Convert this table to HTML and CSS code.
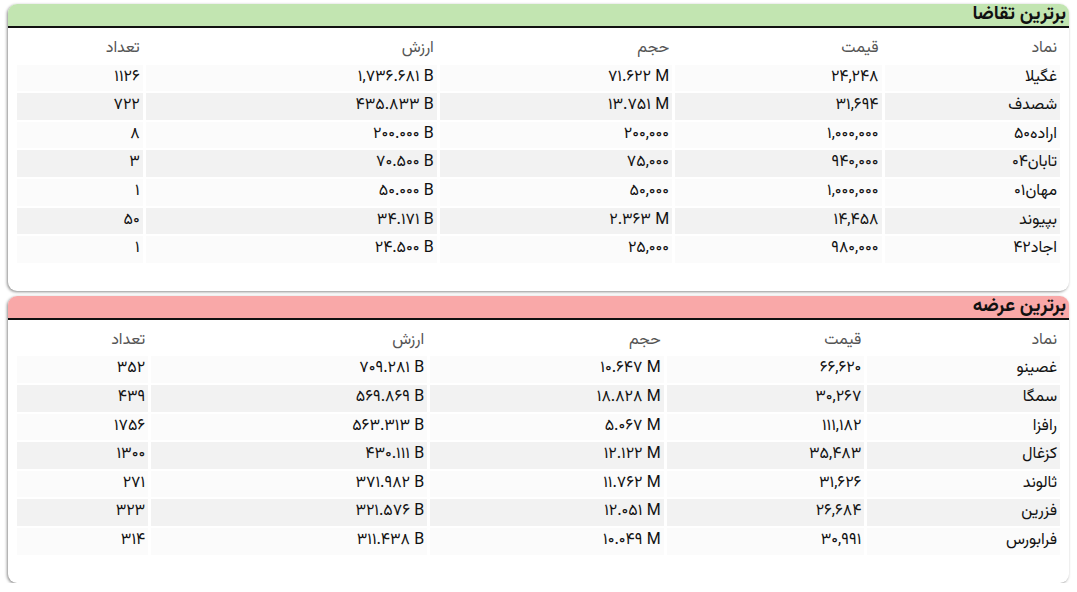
FILE: index.html
```html
<!DOCTYPE html>
<html lang="fa" dir="rtl">
<head>
<meta charset="utf-8">
<title>برترین تقاضا و عرضه</title>
<link rel="stylesheet" href="styles.css">
</head>
<body>
<section class="card">
  <h2 class="card-title buy">برترین تقاضا</h2>
  <table class="grid grid-buy">
    <colgroup><col class="c-sym"><col class="c-price"><col class="c-vol"><col class="c-val"><col class="c-cnt"></colgroup>
    <thead><tr><th>نماد</th><th>قیمت</th><th>حجم</th><th>ارزش</th><th>تعداد</th></tr></thead>
    <tbody>
      <tr><td>غگیلا</td><td>۲۴,۲۴۸</td><td><span class="ltr">۷۱.۶۲۲ M</span></td><td><span class="ltr">۱,۷۳۶.۶۸۱ B</span></td><td>۱۱۲۶</td></tr>
      <tr><td>شصدف</td><td>۳۱,۶۹۴</td><td><span class="ltr">۱۳.۷۵۱ M</span></td><td><span class="ltr">۴۳۵.۸۳۳ B</span></td><td>۷۲۲</td></tr>
      <tr><td>اراده۵۰</td><td>۱,۰۰۰,۰۰۰</td><td>۲۰۰,۰۰۰</td><td><span class="ltr">۲۰۰.۰۰۰ B</span></td><td>۸</td></tr>
      <tr><td>تابان۰۴</td><td>۹۴۰,۰۰۰</td><td>۷۵,۰۰۰</td><td><span class="ltr">۷۰.۵۰۰ B</span></td><td>۳</td></tr>
      <tr><td>مهان۰۱</td><td>۱,۰۰۰,۰۰۰</td><td>۵۰,۰۰۰</td><td><span class="ltr">۵۰.۰۰۰ B</span></td><td>۱</td></tr>
      <tr><td>بپیوند</td><td>۱۴,۴۵۸</td><td><span class="ltr">۲.۳۶۳ M</span></td><td><span class="ltr">۳۴.۱۷۱ B</span></td><td>۵۰</td></tr>
      <tr><td>اجاد۴۲</td><td>۹۸۰,۰۰۰</td><td>۲۵,۰۰۰</td><td><span class="ltr">۲۴.۵۰۰ B</span></td><td>۱</td></tr>
    </tbody>
  </table>
</section>
<section class="card">
  <h2 class="card-title sell">برترین عرضه</h2>
  <table class="grid grid-sell">
    <colgroup><col class="c-sym"><col class="c-price"><col class="c-vol"><col class="c-val"><col class="c-cnt"></colgroup>
    <thead><tr><th>نماد</th><th>قیمت</th><th>حجم</th><th>ارزش</th><th>تعداد</th></tr></thead>
    <tbody>
      <tr><td>غصینو</td><td>۶۶,۶۲۰</td><td><span class="ltr">۱۰.۶۴۷ M</span></td><td><span class="ltr">۷۰۹.۲۸۱ B</span></td><td>۳۵۲</td></tr>
      <tr><td>سمگا</td><td>۳۰,۲۶۷</td><td><span class="ltr">۱۸.۸۲۸ M</span></td><td><span class="ltr">۵۶۹.۸۶۹ B</span></td><td>۴۳۹</td></tr>
      <tr><td>رافزا</td><td>۱۱۱,۱۸۲</td><td><span class="ltr">۵.۰۶۷ M</span></td><td><span class="ltr">۵۶۳.۳۱۳ B</span></td><td>۱۷۵۶</td></tr>
      <tr><td>کزغال</td><td>۳۵,۴۸۳</td><td><span class="ltr">۱۲.۱۲۲ M</span></td><td><span class="ltr">۴۳۰.۱۱۱ B</span></td><td>۱۳۰۰</td></tr>
      <tr><td>ثالوند</td><td>۳۱,۶۲۶</td><td><span class="ltr">۱۱.۷۶۲ M</span></td><td><span class="ltr">۳۷۱.۹۸۲ B</span></td><td>۲۷۱</td></tr>
      <tr><td>فزرین</td><td>۲۶,۶۸۴</td><td><span class="ltr">۱۲.۰۵۱ M</span></td><td><span class="ltr">۳۲۱.۵۷۶ B</span></td><td>۳۲۳</td></tr>
      <tr><td>فرابورس</td><td>۳۰,۹۹۱</td><td><span class="ltr">۱۰.۰۴۹ M</span></td><td><span class="ltr">۳۱۱.۴۳۸ B</span></td><td>۳۱۴</td></tr>
    </tbody>
  </table>
</section>
</body>
</html>
```
FILE: styles.css
```css
html, body {
  margin: 0;
  padding: 0;
  background: #ffffff;
}
body {
  font-family: "Vazirmatn", "Noto Sans Arabic", "DejaVu Sans", sans-serif;
  color: #1a1a1a;
  padding: 4px 8px 0 8px;
  display: flex;
  flex-direction: column;
  gap: 5px;
}
.card {
  background: #fff;
  border-radius: 9px;
  box-shadow: -1px 1px 3px rgba(0, 0, 0, 0.45);
  padding: 0 0 26px 0;
}
.card-title {
  margin: 0;
  height: 22px;
  line-height: 22px;
  font-size: 19px;
  font-weight: bold;
  color: #111;
  padding: 0 3px 0 0;
  border-bottom: 2px solid #111;
  border-radius: 9px 9px 0 0;
}
.card-title.buy { background: #c2e5b1; }
.card-title.sell { background: #f9a8a8; }
.grid {
  margin: 6px 6px 0 6px;
  width: calc(100% - 12px);
  border-spacing: 3px 2px;
  font-size: 16px;
  color: #111;
}
.grid th, .grid td {
  text-align: right;
  padding: 3px 3px;
  line-height: 20.6px;
  white-space: nowrap;
}
.grid th {
  font-weight: normal;
  color: #555;
}
.grid tbody tr:nth-child(odd) td { background: #fbfbfb; }
.grid tbody tr:nth-child(even) td { background: #f2f2f2; }
.ltr {
  direction: ltr;
  unicode-bidi: isolate;
}
.grid-buy .c-sym { width: 176px; }
.grid-buy .c-price { width: 207px; }
.grid-buy .c-vol { width: 233px; }
.grid-buy .c-val { width: 292px; }
.grid-buy .c-cnt { width: 126px; }
.grid-sell .c-sym { width: 194px; }
.grid-sell .c-price { width: 199px; }
.grid-sell .c-vol { width: 235px; }
.grid-sell .c-val { width: 278px; }
.grid-sell .c-cnt { width: 132px; }
```
